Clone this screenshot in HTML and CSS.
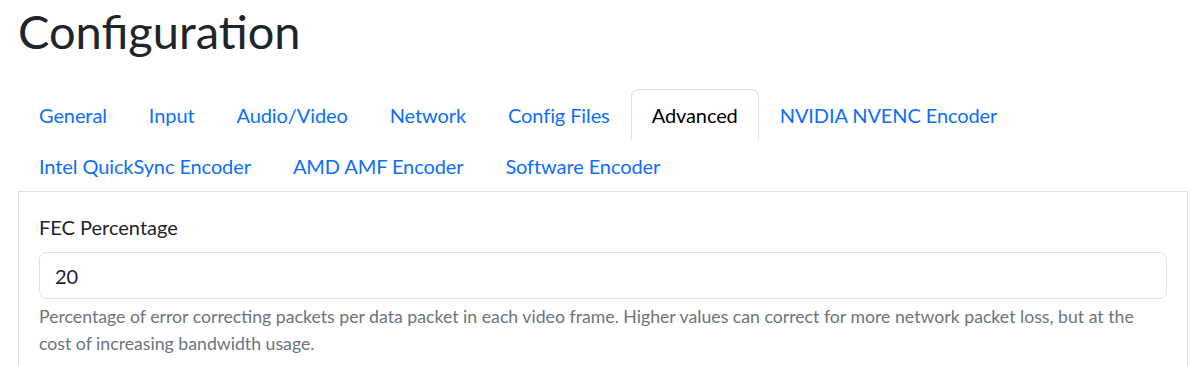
FILE: index.html
```html
<!DOCTYPE html>
<html lang="en">
<head>
<meta charset="utf-8">
<title>Configuration</title>
<link rel="stylesheet" href="styles.css">
</head>
<body>
<div class="page">
  <h1 class="title">Configuration</h1>
  <nav class="tabs">
    <a class="tab" href="#">General</a>
    <a class="tab" href="#">Input</a>
    <a class="tab" href="#">Audio/Video</a>
    <a class="tab" href="#">Network</a>
    <a class="tab" href="#">Config Files</a>
    <a class="tab active" href="#">Advanced</a>
    <a class="tab" href="#">NVIDIA NVENC Encoder</a>
    <a class="tab" href="#">Intel QuickSync Encoder</a>
    <a class="tab" href="#">AMD AMF Encoder</a>
    <a class="tab" href="#">Software Encoder</a>
  </nav>
  <div class="panel">
    <label class="label" for="fec">FEC Percentage</label>
    <input class="input" id="fec" type="text" value="20">
    <div class="help">Percentage of error correcting packets per data packet in each video frame. Higher values can correct for more network packet loss, but at the cost of increasing bandwidth usage.</div>
  </div>
</div>
</body>
</html>
```

FILE: styles.css
```css
html, body {
  margin: 0;
  background: #fff;
}
body {
  font-family: "Lato", "Open Sans", sans-serif;
  color: #212529;
}
.page {
  padding: 0 14px 0 18px;
}
.title {
  margin: 0 0 30px 0;
  padding-top: 3px;
  font-size: 47px;
  line-height: 1.2;
  font-weight: 400;
  color: #212529;
}
.tabs {
  display: flex;
  flex-wrap: wrap;
  border-bottom: 1px solid #dee2e6;
}
.tab {
  display: block;
  padding: 10px 20px;
  font-size: 20px;
  line-height: 30px;
  letter-spacing: -0.1px;
  color: #0d6efd;
  text-decoration: none;
  border: 1px solid transparent;
  border-radius: 7.5px 7.5px 0 0;
  margin-bottom: -1px;
}
.tab.active {
  color: #000;
  background: #fff;
  border-color: #dee2e6 #dee2e6 #fff;
}
.panel {
  border: 1px solid #dee2e6;
  border-top: 0;
  padding: 20px;
  min-height: 200px;
}
.label {
  display: block;
  font-size: 20px;
  line-height: 30px;
  margin-bottom: 10px;
}
.input {
  display: block;
  box-sizing: border-box;
  width: 100%;
  height: 47px;
  padding: 7.5px 15px;
  font-family: inherit;
  font-size: 20px;
  line-height: 30px;
  color: #212529;
  border: 1px solid #dee2e6;
  border-radius: 7.5px;
  outline: none;
}
.help {
  margin-top: 5px;
  font-size: 17.7px;
  line-height: 26.25px;
  color: #6c757d;
}
```
